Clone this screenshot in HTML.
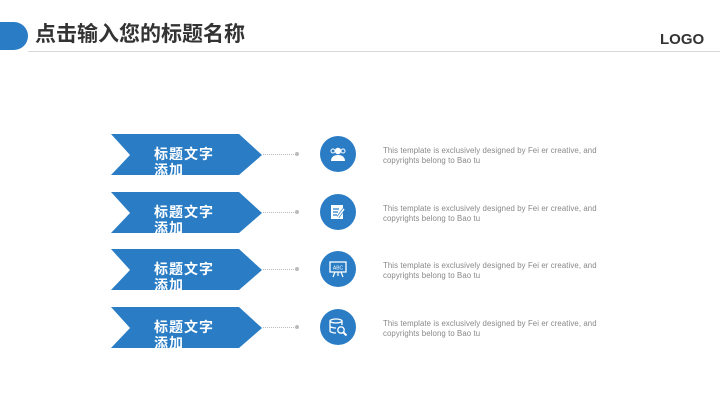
<!DOCTYPE html>
<html><head><meta charset="utf-8"><style>
body{margin:0;width:720px;height:405px;background:#fff;position:relative;overflow:hidden;font-family:"Liberation Sans","Noto Sans CJK SC",sans-serif}
.hd{position:absolute;left:-10px;top:22px;width:38px;height:28px;background:#2a7dc5;border-radius:0 14px 14px 0}
.title{position:absolute;left:35px;top:21px;font-size:21px;font-weight:bold;color:#333;line-height:28px}
.line{position:absolute;left:28px;top:51px;width:692px;height:1px;background:#d8d8d8}
.logo{position:absolute;left:660px;top:31px;font-size:15px;font-weight:bold;color:#333}
.row{position:absolute;left:0;width:720px;height:42px}
.row svg.ar{position:absolute;left:111px;top:0}
.lbl{position:absolute;left:154px;top:12px;width:68px;height:29px;overflow:hidden;color:#fff;font-size:14px;font-weight:bold;line-height:16px;letter-spacing:1px}
.dl{position:absolute;left:263px;top:20px;width:33px;border-top:1px dotted #bbb}
.dot{position:absolute;left:295px;top:18px;width:4px;height:4px;border-radius:50%;background:#bbb}
.ci{position:absolute;left:320px;top:2px;width:36px;height:36px;border-radius:50%;background:#2a7dc5}
.ci svg{position:absolute;left:8px;top:8px}
.tx{position:absolute;left:383px;top:12px;font-size:7.8px;line-height:10px;color:#888;letter-spacing:0.1px}
</style></head><body>
<div class="hd"></div>
<div class="title">点击输入您的标题名称</div>
<div class="line"></div>
<div class="logo">LOGO</div>

<div class="row" style="top:134px">
<svg class="ar" width="152" height="42"><polygon points="0,0 128,0 151,21 128,41 0,41 19,21" fill="#2a7dc5"/></svg>
<div class="lbl">标题文字添加</div><div class="dl"></div><div class="dot"></div>
<div class="ci"><svg width="20" height="20" fill="#fff"><circle cx="10" cy="7" r="3.2"/><path d="M3 17c0-4 3-6 7-6s7 2 7 6z"/><circle cx="5" cy="7" r="2" fill="none" stroke="#fff" stroke-width="1"/><circle cx="15" cy="7" r="2" fill="none" stroke="#fff" stroke-width="1"/></svg></div>
<div class="tx">This template is exclusively designed by Fei er creative, and<br>copyrights belong to Bao tu</div>
</div>

<div class="row" style="top:192px">
<svg class="ar" width="152" height="42"><polygon points="0,0 128,0 151,21 128,41 0,41 19,21" fill="#2a7dc5"/></svg>
<div class="lbl">标题文字添加</div><div class="dl"></div><div class="dot"></div>
<div class="ci"><svg width="20" height="20"><rect x="3" y="3" width="12" height="14" fill="#fff"/><path d="M5 7h6M5 10h5M5 13h4" stroke="#2a7dc5" stroke-width="1.2"/><path d="M10 15l6-8" stroke="#2a7dc5" stroke-width="3"/><path d="M10 15l6-8" stroke="#fff" stroke-width="1.5"/></svg></div>
<div class="tx">This template is exclusively designed by Fei er creative, and<br>copyrights belong to Bao tu</div>
</div>

<div class="row" style="top:249px">
<svg class="ar" width="152" height="42"><polygon points="0,0 128,0 151,21 128,41 0,41 19,21" fill="#2a7dc5"/></svg>
<div class="lbl">标题文字添加</div><div class="dl"></div><div class="dot"></div>
<div class="ci"><svg width="20" height="20"><rect x="2" y="3" width="16" height="10" fill="none" stroke="#fff" stroke-width="1.3"/><text x="10" y="10.5" font-size="5" fill="#fff" text-anchor="middle" font-family="Liberation Sans">ABC</text><path d="M7 13l-2 5M13 13l2 5M10 13v4" stroke="#fff" stroke-width="1.2"/></svg></div>
<div class="tx">This template is exclusively designed by Fei er creative, and<br>copyrights belong to Bao tu</div>
</div>

<div class="row" style="top:307px">
<svg class="ar" width="152" height="42"><polygon points="0,0 128,0 151,21 128,41 0,41 19,21" fill="#2a7dc5"/></svg>
<div class="lbl">标题文字添加</div><div class="dl"></div><div class="dot"></div>
<div class="ci"><svg width="20" height="20" fill="none" stroke="#fff" stroke-width="1.3"><ellipse cx="8" cy="4" rx="6" ry="2"/><path d="M2 4v10c0 1 3 2 6 2M14 4v4M2 9c0 1 3 2 6 2"/><circle cx="13" cy="13" r="3.2"/><path d="M15.5 15.5l3 3" stroke-width="2"/></svg></div>
<div class="tx">This template is exclusively designed by Fei er creative, and<br>copyrights belong to Bao tu</div>
</div>
</body></html>
